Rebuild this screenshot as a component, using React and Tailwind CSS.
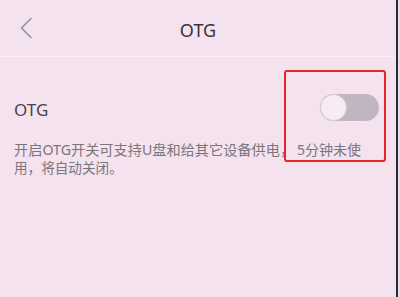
import React from "react";

const font = { fontFamily: '"Noto Sans", "Noto Sans CJK SC", sans-serif' };

export default function App() {
  return (
    <div
      className="relative w-[400px] h-[297px] overflow-hidden bg-[#f4e2ee] flex"
      style={font}
    >
      <div className="flex-1 flex flex-col">
        {/* Header */}
        <div className="h-[57px] flex items-center relative border-b border-[#faeef5]">
          <div className="w-[48px] flex justify-center pl-[4px]">
            <svg width="14" height="22" viewBox="0 0 14 22" fill="none">
              <path
                d="M12 1.5 L2.5 11 L12 20.5"
                stroke="#8f93ad"
                strokeWidth="1.6"
                strokeLinecap="round"
                strokeLinejoin="round"
              />
            </svg>
          </div>
          <div className="flex-1 text-center text-[18px] text-[#3a3538] pr-[48px] mt-[4px]">
            OTG
          </div>
        </div>

        {/* OTG row */}
        <div className="flex items-center justify-between pl-[14px] pr-[17px] pt-[37px]">
          <span className="text-[17px] text-[#49444a] leading-none mt-[3px]">OTG</span>
          <div className="w-[59px] h-[27px] rounded-full bg-[#c1b5c1] flex items-center">
            <div className="w-[27px] h-[27px] rounded-full bg-[#f7ecf4] border border-[#d6ccd4]" />
          </div>
        </div>

        {/* Description */}
        <div className="pl-[14px] pt-[20px] text-[14.2px] leading-[18px] text-[#7c757b] whitespace-nowrap">
          <div>
            <span>开启OTG开关可支持U盘和给其它设备供电</span>
            <span className="inline-block w-[17px]">，</span>
            <span className="text-[14px]">5分钟未使</span>
          </div>
          <div className="text-[13.6px]">用，将自动关闭。</div>
        </div>
      </div>

      {/* Device edge */}
      <div className="w-[2px] bg-[#2a2a36]" />
      <div className="w-[2px] bg-[#e6dde6]" />

      {/* Annotation box */}
      <div className="absolute left-[284px] top-[70px] w-[102px] h-[92px] border-2 border-[#e8262a] rounded-[3px]" />
    </div>
  );
}
